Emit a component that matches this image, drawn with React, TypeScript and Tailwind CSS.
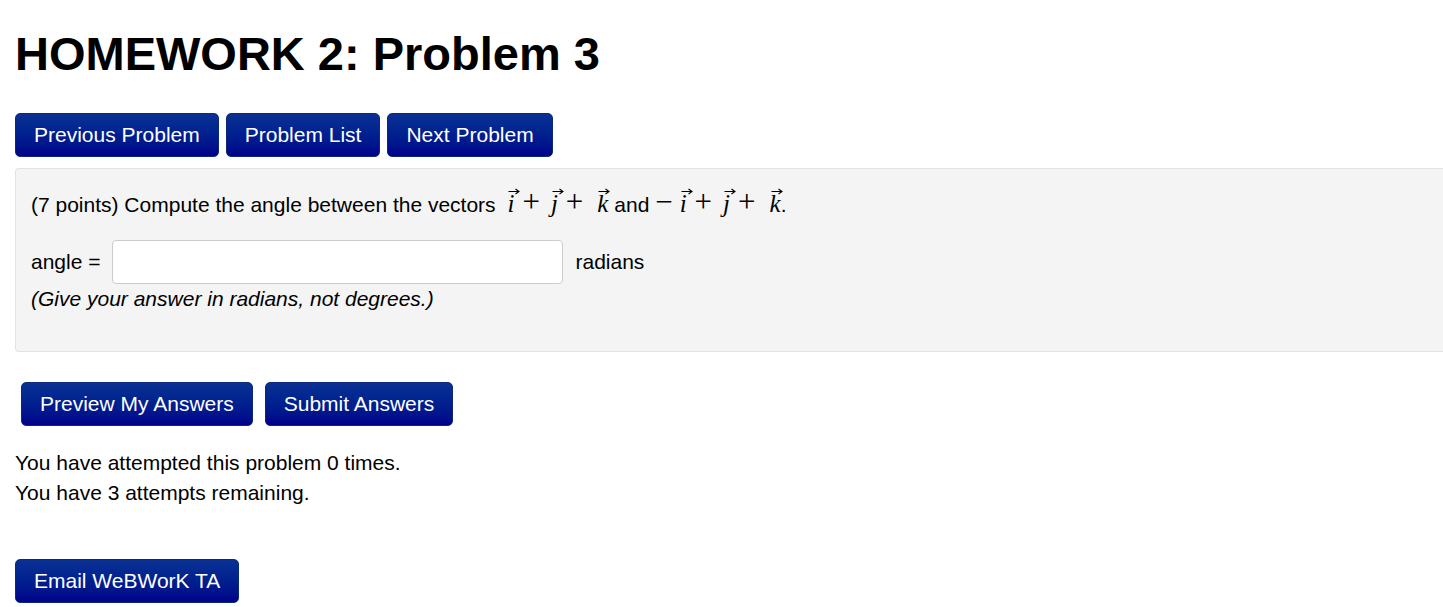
import React from "react";

const btn =
  "rounded-[5px] border border-[#0c2a7a] bg-gradient-to-b from-[#0b3193] to-[#00008a] px-[18px] text-[21px] leading-[42px] text-white";

function Arrow() {
  return (
    <svg className="absolute left-[1px] top-[-3px]" width="12" height="7" viewBox="0 0 12 7">
      <path d="M0.5 3.5H10.5M7.5 1L11 3.5L7.5 6" fill="none" stroke="black" strokeWidth="1.1" />
    </svg>
  );
}

function Vec({ v }: { v: string }) {
  return (
    <span className="relative inline-block leading-none">
      <Arrow />
      <span className="italic">{v}</span>
    </span>
  );
}

function Plus() {
  return <span className="ml-[8px] mr-[11px] text-[31px] leading-[0]">+</span>;
}

function MathExpr({ sign }: { sign?: boolean }) {
  return (
    <span className="font-['Liberation_Serif',serif] text-[25px] leading-none">
      {sign && <span className="mr-[7px] text-[31px] leading-[0]">−</span>}
      <Vec v="i" />
      <Plus />
      <Vec v="j" />
      <Plus />
      <span className="ml-[3px]">
        <Vec v="k" />
      </span>
    </span>
  );
}

export default function App() {
  return (
    <div className="min-h-screen bg-white pl-[15px] font-['Liberation_Sans',Arial,sans-serif] text-[21px] text-black">
      <h1 className="pt-[26px] text-[47px] font-bold leading-[56px]">HOMEWORK 2: Problem 3</h1>

      <div className="mt-[31px] flex gap-[7px]">
        <button className={btn}>Previous Problem</button>
        <button className={btn}>Problem List</button>
        <button className={btn}>Next Problem</button>
      </div>

      <div className="mt-[11px] h-[184px] rounded-l-[4px] border border-r-0 border-[#e3e3e3] bg-[#f4f4f4] px-[15px] pt-[20px]">
        <p className="leading-[32px]">
          (7 points) Compute the angle between the vectors{" "}
          <span className="ml-[6px]">
            <MathExpr />
          </span>{" "}
          and <MathExpr sign />.
        </p>
        <div className="mt-[19px] flex items-center gap-[12px]">
          <span>angle =</span>
          <input className="h-[44px] w-[451px] rounded-[4px] border border-[#cccccc] bg-white" />
          <span>radians</span>
        </div>
        <p className="mt-[2px] italic leading-[26px]">(Give your answer in radians, not degrees.)</p>
      </div>

      <div className="mt-[30px] flex gap-[12px] pl-[6px]">
        <button className={btn}>Preview My Answers</button>
        <button className={btn}>Submit Answers</button>
      </div>

      <div className="mt-[22px] leading-[30px]">
        <p>You have attempted this problem 0 times.</p>
        <p>You have 3 attempts remaining.</p>
      </div>

      <button className={`${btn} mt-[51px]`}>Email WeBWorK TA</button>
    </div>
  );
}
